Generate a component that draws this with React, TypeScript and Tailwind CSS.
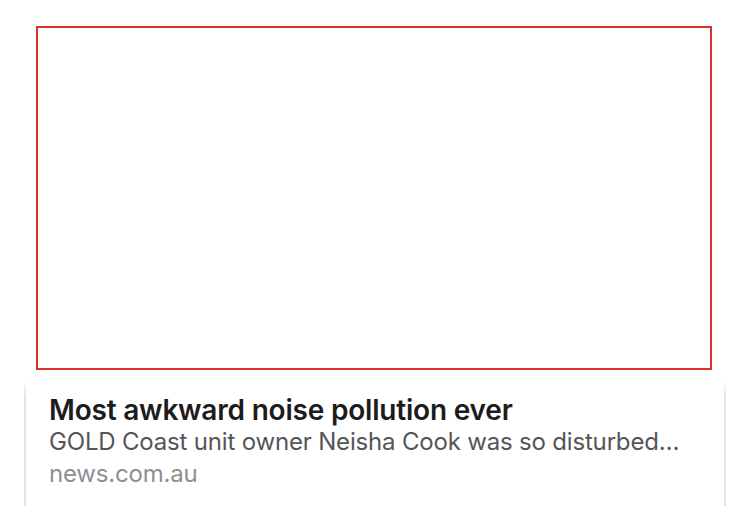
function Edge() {
  return (
    <div className="w-[2px] flex flex-col">
      <div className="h-[18px] bg-gradient-to-b from-white to-[#e2e2e2]" />
      <div className="flex-1 bg-[#e2e2e2]" />
    </div>
  )
}

export default function App() {
  return (
    <div className="w-[750px] h-[506px] bg-white overflow-hidden" style={{ fontFamily: 'Inter, "Liberation Sans", Arial, sans-serif' }}>
      <div className="pt-[26px] pl-[36px]">
        <div className="w-[676px] h-[344px] border-2 border-[#e2302f]" />
      </div>
      <div className="mt-[10px] ml-[24px] w-[702px] h-[200px] flex">
        <Edge />
        <div className="flex-1 px-[23px] pt-[14px]">
          <div className="text-[28px] font-semibold leading-[32px] text-[#1c1c1e] tracking-[-0.2px]">Most awkward noise pollution ever</div>
          <div className="text-[24px] leading-[32px] text-[#555558] tracking-[-0.18px] whitespace-nowrap overflow-hidden">GOLD Coast unit owner Neisha Cook was so disturbed…</div>
          <div className="text-[24px] leading-[32px] text-[#8e8e93] tracking-[-0.2px]">news.com.au</div>
        </div>
        <Edge />
      </div>
    </div>
  )
}
